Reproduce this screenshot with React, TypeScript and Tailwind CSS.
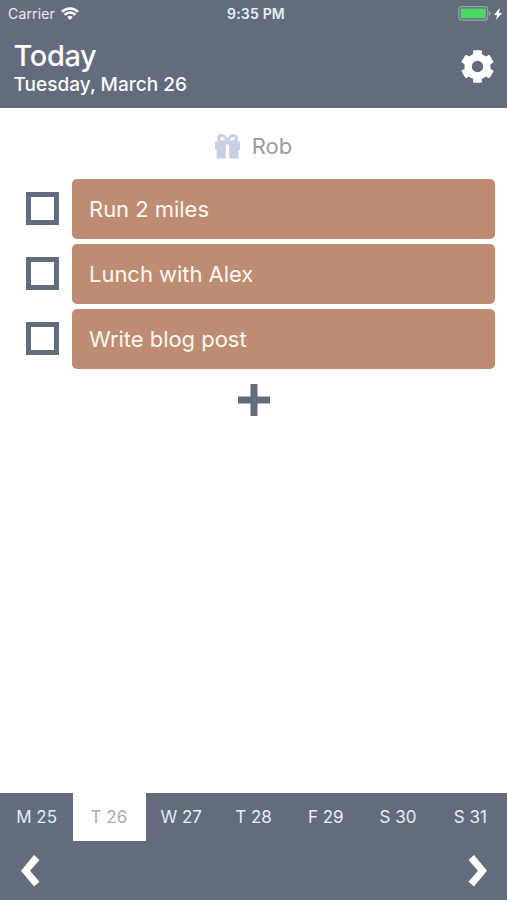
import React from 'react';

const tasks = ['Run 2 miles', 'Lunch with Alex', 'Write blog post'];

const days = [
  { label: 'M 25' },
  { label: 'T 26', active: true },
  { label: 'W 27' },
  { label: 'T 28' },
  { label: 'F 29' },
  { label: 'S 30' },
  { label: 'S 31' }
];

function StatusBar() {
  return (
    <div className="grid grid-cols-3 h-[27px] items-center pl-[8px] pr-[5px] text-[#e6edf8]">
      <div className="flex items-center gap-[6px]">
        <span className="text-[14px] tracking-[0.15px]">Carrier</span>
        <svg className="w-[18px] h-[13px]" viewBox="0 0 18 13" fill="none" stroke="white" strokeWidth="2.5">
          <path d="M1 4.8A11.3 11.3 0 0 1 17 4.8" />
          <path d="M3.6 7.9A7.5 7.5 0 0 1 14.4 7.9" />
          <path d="M6.2 10.2A4 4 0 0 1 11.8 10.2L9 13Z" fill="white" stroke="none" />
        </svg>
      </div>
      <span className="pl-[2px] text-center text-[14px] font-semibold tracking-[0.2px] whitespace-nowrap">9:35 PM</span>
      <div className="flex items-center justify-end gap-[3px]">
        <svg className="w-[33px] h-[15px]" viewBox="0 0 33 15">
          <rect x="0.7" y="0.7" width="29" height="13.4" rx="3" fill="none" stroke="#9aa3af" strokeWidth="1.2" />
          <rect x="2.5" y="2.5" width="25.4" height="9.8" rx="1" fill="#4cd964" />
          <path d="M31 5v5q1.6-.8 1.6-2.5T31 5z" fill="#9aa3af" />
        </svg>
        <svg className="w-[8px] h-[12px]" viewBox="0 0 8 12" fill="white">
          <path d="M5.8 0L0 7h3L2 12 8 5H5z" />
        </svg>
      </div>
    </div>
  );
}

function GearIcon() {
  return (
    <svg className="w-[39px] h-[39px]" viewBox="0 0 24 24" fill="white">
      <rect x="9.3" y="2" width="5.4" height="20" rx="0.6" />
      <rect x="9.3" y="2" width="5.4" height="20" rx="0.6" transform="rotate(60 12 12)" />
      <rect x="9.3" y="2" width="5.4" height="20" rx="0.6" transform="rotate(120 12 12)" />
      <circle cx="12" cy="12" r="8" />
      <circle cx="12" cy="12" r="3.5" fill="#626c7c" />
    </svg>
  );
}

function GiftIcon() {
  return (
    <svg className="w-[25px] h-[25px]" viewBox="0 0 25 25" fill="#c6d0e2">
      <path d="M1 7.500h9.800V16H0V8.500q0-1 1-1zM14.200 7.500H24q1 0 1 1V16H14.200z" />
      <path d="M10 7.500h5v3h-5z" />
      <path d="M1.600 15h9.200v9.600H2.600q-1 0-1-1zM14.200 15h9.200v8.600q0 1-1 1h-8.200z" />
      <path
        d="M12.500 8C11 3.500 9 1.500 6.800 1.500S3.500 2.800 3.500 4.500s1.200 3.500 3.700 3.500zM12.500 8C14 3.500 16 1.500 18.200 1.500s3.300 1.300 3.300 3-1.200 3.500-3.700 3.500z"
        fill="none"
        stroke="#c6d0e2"
        strokeWidth="3"
      />
    </svg>
  );
}

export default function App() {
  return (
    <div className="flex flex-col h-screen bg-white font-['Inter',sans-serif]">
      <header className="h-[108px] shrink-0 bg-[#626c7c]">
        <StatusBar />
        <div className="flex items-center justify-between pl-[13.5px] pr-[10px] text-[#fafcff]">
          <div className="pt-[12px]">
            <h1 className="text-[29px] leading-[34px] font-[450] tracking-[-0.4px]">Today</h1>
            <p className="text-[19px] leading-[24px] font-medium tracking-[0.03px] whitespace-nowrap">Tuesday, March 26</p>
          </div>
          <button aria-label="Settings" className="pt-[9px]">
            <GearIcon />
          </button>
        </div>
      </header>

      <main className="flex-1 flex flex-col pt-[25px]">
        <div className="flex items-center justify-center gap-[12px] h-[26px] text-[22px] text-[#9b9b9b]">
          <GiftIcon />
          <span>Rob</span>
        </div>
        <ul className="flex flex-col gap-[5px] pt-[20px] pl-[26px] pr-[12px]">
          {tasks.map((task) => (
            <li key={task} className="flex items-center gap-[13px] h-[60px]">
              <div className="w-[33px] h-[33px] mb-[2px] border-[5px] border-[#626c7c]"></div>
              <div className="flex-1 h-full flex items-center rounded-[5px] bg-[#bd8c72] pl-[17px] pt-px text-[22px] tracking-[-0.03px] text-[#fff8f2]">
                {task}
              </div>
            </li>
          ))}
        </ul>
        <button aria-label="Add task" className="self-center mt-[15px]">
          <svg className="w-[32px] h-[32px]" viewBox="0 0 32 32" fill="#626c7c">
            <path d="M12.500 0h7v12.500H32v7H19.500V32h-7V19.500H0v-7h12.500z" />
          </svg>
        </button>
      </main>

      <footer className="h-[107px] shrink-0 bg-[#626c7c]">
        <div className="grid grid-cols-7 h-[48px] pl-px">
          {days.map((day) => (
            <div
              key={day.label}
              className={`flex items-center justify-center pt-[2px] pr-px text-[17px] ${day.active ? 'bg-white text-[#adadad]' : 'text-[#e6edf8]'}`}
            >
              {day.label}
            </div>
          ))}
        </div>
        <div className="flex justify-between pl-[21px] pr-[20px] pt-[14px]">
          <svg className="w-[19px] h-[32px]" viewBox="0 0 19 32" fill="white">
            <path d="M13 0L0 15.700 13 31.500l5.500-4.700L9 15.700 18.500 5z" />
          </svg>
          <svg className="w-[19px] h-[32px]" viewBox="0 0 19 32" fill="white">
            <path d="M6 0l13 15.700L6 31.500.500 26.800 10 15.700.500 5z" />
          </svg>
        </div>
      </footer>
    </div>
  );
}
